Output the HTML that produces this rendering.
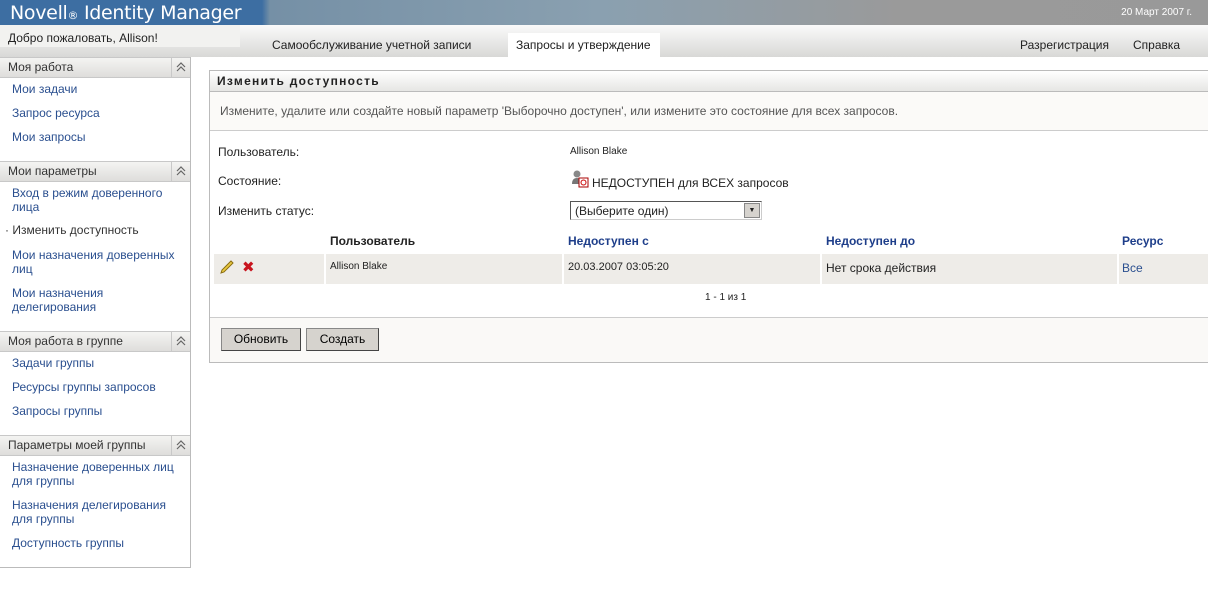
<!DOCTYPE html><html><head><meta charset="utf-8"><style>
body{margin:0;width:1208px;height:589px;overflow:hidden;background:#fff;font-family:"Liberation Sans","DejaVu Sans",sans-serif;font-size:12px;color:#222;position:relative}
.a{position:absolute}
.lnk{color:#2a4f8f}
.sh{position:absolute;left:0;width:190px;height:19px;background:linear-gradient(#f4f4f2,#dedddb);border-top:1px solid #c8c8c8;border-bottom:1px solid #c8c8c8;font-size:12px;line-height:19px}
.sh span{padding-left:8px;color:#333}
.sh i{position:absolute;right:0;top:0;width:18px;height:19px;border-left:1px solid #c8c8c8}
.sh i:after{content:"";position:absolute;left:4px;top:3px;width:10px;height:12px;background:url("data:,") }
.it{position:absolute;left:12px;color:#2a4f8f;font-size:12px;line-height:14px}
.btn{position:absolute;top:328px;height:21px;background:#d6d3ce;border:1px solid #888;border-right-color:#444;border-bottom-color:#444;font-size:12px;line-height:21px;text-align:center;color:#000}
</style></head><body>
<div class="a" style="left:0;top:0;width:1208px;height:25px;background:linear-gradient(90deg,#3d6ea2 0,#3d6ea2 262px,#7590a6 270px,#8aa0b0 600px,#9a9a9a 900px,#999 1208px)"></div>
<div class="a" style="left:10px;top:2px;color:#fff;font-size:19px;font-family:'DejaVu Sans',sans-serif;letter-spacing:-0.3px">Novell<span style="font-size:11px">®</span> Identity Manager</div>
<div class="a" style="right:16px;top:7px;color:#fff;font-size:10px">20 Март 2007 г.</div>
<div class="a" style="left:0;top:25px;width:1208px;height:32px;background:linear-gradient(#fafafa,#d8d8d6)"></div>
<div class="a" style="left:0;top:25px;width:240px;height:22px;background:#f2f2f0"></div>
<div class="a" style="left:8px;top:31px;font-size:12px;color:#222">Добро пожаловать, Allison!</div>
<div class="a" style="left:272px;top:38px;font-size:12px">Самообслуживание учетной записи</div>
<div class="a" style="left:508px;top:33px;width:152px;height:24px;background:#fff"></div>
<div class="a" style="left:516px;top:38px;font-size:12px">Запросы и утверждение</div>
<div class="a" style="left:1020px;top:38px;font-size:12px">Разрегистрация</div>
<div class="a" style="left:1133px;top:38px;font-size:12px">Справка</div>
<div class="a" style="left:0;top:57px;width:190px;height:510px;border-right:1px solid #bbb;border-bottom:1px solid #bbb;background:#fff"></div>
<div class="sh" style="top:57px"><span>Моя работа</span><i><svg width="18" height="19"><path d="M5 9 L9 5 L13 9 M5 13 L9 9 L13 13" fill="none" stroke="#666" stroke-width="1.2"/></svg></i></div>
<div class="it" style="top:82px">Мои задачи</div>
<div class="it" style="top:106px">Запрос ресурса</div>
<div class="it" style="top:130px">Мои запросы</div>
<div class="sh" style="top:161px"><span>Мои параметры</span><i><svg width="18" height="19"><path d="M5 9 L9 5 L13 9 M5 13 L9 9 L13 13" fill="none" stroke="#666" stroke-width="1.2"/></svg></i></div>
<div class="it" style="top:186px">Вход в режим доверенного<br>лица</div>
<div class="it" style="top:223px;color:#333;left:5px">· Изменить доступность</div>
<div class="it" style="top:248px">Мои назначения доверенных<br>лиц</div>
<div class="it" style="top:286px">Мои назначения<br>делегирования</div>
<div class="sh" style="top:331px"><span>Моя работа в группе</span><i><svg width="18" height="19"><path d="M5 9 L9 5 L13 9 M5 13 L9 9 L13 13" fill="none" stroke="#666" stroke-width="1.2"/></svg></i></div>
<div class="it" style="top:356px">Задачи группы</div>
<div class="it" style="top:380px">Ресурсы группы запросов</div>
<div class="it" style="top:404px">Запросы группы</div>
<div class="sh" style="top:435px"><span>Параметры моей группы</span><i><svg width="18" height="19"><path d="M5 9 L9 5 L13 9 M5 13 L9 9 L13 13" fill="none" stroke="#666" stroke-width="1.2"/></svg></i></div>
<div class="it" style="top:460px">Назначение доверенных лиц<br>для группы</div>
<div class="it" style="top:498px">Назначения делегирования<br>для группы</div>
<div class="it" style="top:536px">Доступность группы</div>

<div class="a" style="left:209px;top:70px;width:1000px;height:291px;border:1px solid #bbb;border-right:none;background:#fff"></div>
<div class="a" style="left:210px;top:71px;width:998px;height:20px;background:linear-gradient(#fff,#e6e6e4);border-bottom:1px solid #bbb"></div>
<div class="a" style="left:217px;top:74px;font-weight:bold;font-size:12px;letter-spacing:1.3px;color:#222">Изменить доступность</div>
<div class="a" style="left:210px;top:92px;width:998px;height:38px;background:#fbfaf8;border-bottom:1px solid #ccc"></div>
<div class="a" style="left:220px;top:104px;color:#555;font-size:12px">Измените, удалите или создайте новый параметр 'Выборочно доступен', или измените это состояние для всех запросов.</div>
<div class="a" style="left:218px;top:145px;font-size:12px">Пользователь:</div>
<div class="a" style="left:570px;top:146px;font-size:10px">Allison Blake</div>
<div class="a" style="left:218px;top:174px;font-size:12px">Состояние:</div>
<svg class="a" style="left:571px;top:170px" width="18" height="18"><circle cx="6" cy="4" r="3.5" fill="#888"/><path d="M1 14 Q1 8 6 8 Q11 8 11 14Z" fill="#777"/><rect x="8" y="8" width="9" height="9" fill="#fff" stroke="#a00"/><circle cx="12.5" cy="12.5" r="2.5" fill="none" stroke="#c00"/></svg>
<div class="a" style="left:592px;top:176px;font-size:12px">НЕДОСТУПЕН для ВСЕХ запросов</div>
<div class="a" style="left:218px;top:204px;font-size:12px">Изменить статус:</div>
<div class="a" style="left:570px;top:201px;width:190px;height:17px;border:1px solid #555;border-right-color:#ccc;border-bottom-color:#ccc;background:#fff"><span style="position:absolute;left:4px;top:2px;font-size:12px">(Выберите один)</span><span style="position:absolute;right:1px;top:1px;width:14px;height:13px;background:#d6d3ce;border:1px solid #888;font-size:7px;text-align:center;line-height:13px">▼</span></div>
<div class="a" style="left:330px;top:234px;font-weight:bold;font-size:12px">Пользователь</div>
<div class="a" style="left:568px;top:234px;font-weight:bold;font-size:12px;color:#1e3e8a">Недоступен с</div>
<div class="a" style="left:826px;top:234px;font-weight:bold;font-size:12px;color:#1e3e8a">Недоступен до</div>
<div class="a" style="left:1122px;top:234px;font-weight:bold;font-size:12px;color:#1e3e8a">Ресурс</div>
<div class="a" style="left:214px;top:254px;width:994px;height:30px;background:#eeece8"></div>
<div class="a" style="left:324px;top:254px;width:2px;height:30px;background:#fff"></div>
<div class="a" style="left:562px;top:254px;width:2px;height:30px;background:#fff"></div>
<div class="a" style="left:820px;top:254px;width:2px;height:30px;background:#fff"></div>
<div class="a" style="left:1117px;top:254px;width:2px;height:30px;background:#fff"></div>
<svg class="a" style="left:219px;top:259px" width="16" height="16"><path d="M2 14 L3 11 L12 2 L14 4 L5 13Z" fill="#e8c840" stroke="#8a6d10"/></svg>
<div class="a" style="left:242px;top:258px;color:#c8141e;font-weight:bold;font-size:15px">✖</div>
<div class="a" style="left:330px;top:261px;font-size:10px">Allison Blake</div>
<div class="a" style="left:568px;top:261px;font-size:11px">20.03.2007 03:05:20</div>
<div class="a" style="left:826px;top:261px;font-size:12px">Нет срока действия</div>
<div class="a lnk" style="left:1122px;top:261px;font-size:12px">Все</div>
<div class="a" style="left:705px;top:292px;font-size:10px">1 - 1 из 1</div>
<div class="a" style="left:210px;top:317px;width:998px;height:44px;background:#faf9f7;border-top:1px solid #ccc"></div>
<div class="btn" style="left:221px;width:78px">Обновить</div>
<div class="btn" style="left:306px;width:71px">Создать</div>
</body></html>
